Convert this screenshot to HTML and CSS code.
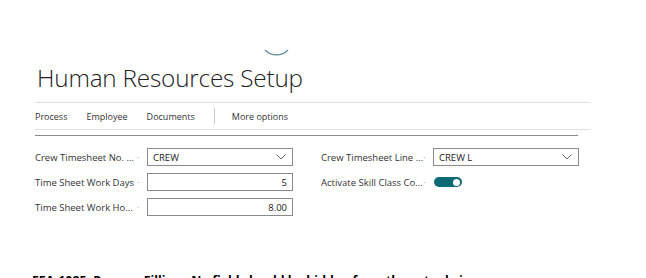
FILE: index.html
```html
<!DOCTYPE html>
<html lang="en">
<head>
    <meta charset="UTF-8">
    <meta name="viewport" content="width=device-width, initial-scale=1.0">
    <title>Human Resources Setup</title>
    <link rel="stylesheet" href="styles.css">
</head>

<body>
    <div class="spinner">
        <svg width="30" height="10" viewBox="0 0 30 10">
            <path d="M2 2 A16 16 0 0 0 25 2" fill="none" stroke="#5f8f97" stroke-width="1.2"/>
        </svg>
    </div>

    <div class="page">
        <h1 class="title">Human Resources Setup</h1>

        <div class="actionbar">
            <span class="action">Process</span>
            <span class="action">Employee</span>
            <span class="action">Documents</span>
            <span class="divider"></span>
            <span class="action">More options</span>
        </div>

        <div class="fasttab">
            <div class="column">
                <div class="field">
                    <span class="label">Crew Timesheet No. ...</span>
                    <span class="dot">·</span>
                    <div class="input select">
                        <span>CREW</span>
                        <svg width="10" height="6" viewBox="0 0 10 6"><path d="M0.5 0.5 L5 5 L9.5 0.5" fill="none" stroke="#555" stroke-width="0.9"/></svg>
                    </div>
                </div>
                <div class="field">
                    <span class="label">Time Sheet Work Days</span>
                    <span class="dot">·</span>
                    <div class="input number">5</div>
                </div>
                <div class="field">
                    <span class="label">Time Sheet Work Ho...</span>
                    <span class="dot">·</span>
                    <div class="input number">8.00</div>
                </div>
            </div>

            <div class="column">
                <div class="field">
                    <span class="label">Crew Timesheet Line ...</span>
                    <span class="dot">·</span>
                    <div class="input select">
                        <span>CREW L</span>
                        <svg width="10" height="6" viewBox="0 0 10 6"><path d="M0.5 0.5 L5 5 L9.5 0.5" fill="none" stroke="#555" stroke-width="0.9"/></svg>
                    </div>
                </div>
                <div class="field">
                    <span class="label">Activate Skill Class Co...</span>
                    <span class="dot">·</span>
                    <span class="toggle"><span class="knob"></span></span>
                </div>
            </div>
        </div>
    </div>

    <p class="note">FEA-1025: Process Filling - No field should be hidden from the actual view</p>
</body>
</html>
```

FILE: styles.css
```css
body {
    font-family: 'Open Sans', 'Noto Sans', sans-serif;
    background-color: #ffffff;
    color: #212121;
    margin: 0;
    width: 646px;
    height: 278px;
    overflow: hidden;
}

.spinner {
    height: 56px;
    padding-left: 263px;
    box-sizing: border-box;
    padding-top: 48px;
}

.spinner svg {
    display: block;
}

.page {
    margin-left: 35px;
    width: 556px;
}

.title {
    font-size: 24.3px;
    font-weight: 300;
    line-height: 34px;
    margin: 0;
    height: 46px;
    padding: 5px 0 0 2px;
    box-sizing: border-box;
    letter-spacing: -0.2px;
}

.actionbar {
    display: flex;
    align-items: center;
    height: 26px;
    border-top: 1px solid #e1e1e1;
    border-bottom: 1px solid #e1e1e1;
    font-size: 9px;
    color: #333;
}

.action {
    margin-right: 19px;
}

.divider {
    width: 1px;
    height: 16px;
    background: #c8c8c8;
    margin: 0 17px 0 0;
}

.fasttab {
    display: flex;
    gap: 28px;
    margin-top: 5px;
    width: 543px;
    border-top: 1px solid #8a8a8a;
    padding-top: 12px;
}

.column {
    display: flex;
    flex-direction: column;
    gap: 7px;
}

.field {
    display: flex;
    align-items: center;
    height: 18px;
    font-size: 9.5px;
    color: #333;
}

.label {
    width: 102px;
    white-space: nowrap;
}

.dot {
    width: 10px;
    color: #aaa;
}

.input {
    width: 146px;
    height: 18px;
    box-sizing: border-box;
    border: 1px solid #8a8a8a;
    padding: 0 5px;
    display: flex;
    align-items: center;
    color: #212121;
}

.select {
    justify-content: space-between;
    padding-right: 6px;
}

.number {
    justify-content: flex-end;
}

.toggle {
    display: flex;
    align-items: center;
    justify-content: flex-end;
    width: 28px;
    height: 10px;
    box-sizing: border-box;
    border-radius: 5px;
    background: #0b6a75;
    padding-right: 2px;
    margin-left: 1px;
}

.knob {
    width: 7px;
    height: 7px;
    border-radius: 50%;
    background: #ffffff;
}

.note {
    margin: 0;
    position: absolute;
    top: 273px;
    left: 32px;
    font-size: 12.4px;
    line-height: 16px;
    font-weight: 700;
    color: #000;
    white-space: nowrap;
}
```
